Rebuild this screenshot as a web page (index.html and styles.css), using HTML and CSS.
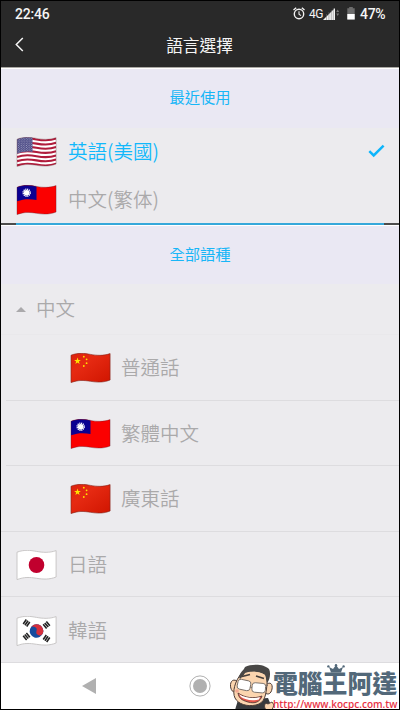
FILE: index.html
```html
<!DOCTYPE html>
<html lang="zh-Hant">
<head>
<meta charset="utf-8">
<title>語言選擇</title>
<link rel="stylesheet" href="styles.css">
</head>
<body>
<svg class="defs" width="0" height="0">
  <defs>
    <clipPath id="wave"><path d="M.5 2.2C8-.6 14 .3 20 1.4S33 3 39.6.6V27C33 29.6 27 29.4 20 28.3S8 26.8.5 29.6Z"/></clipPath>
    <path id="edge" d="M.5 2.2C8-.6 14 .3 20 1.4S33 3 39.6.6V27C33 29.6 27 29.4 20 28.3S8 26.8.5 29.6Z"/>
    <path id="stripe" d="M.5 2.2C8-.6 14 .3 20 1.4S33 3 39.6.6" fill="none" stroke="#b01c3c" stroke-width="2.1"/>
    <path id="star" d="M0-3.6 .85-1.1 3.4-1.1 1.35.45 2.1 3 0 1.5-2.1 3-1.35.45-3.4-1.1-.85-1.1Z"/>
    <linearGradient id="red" x1="0" y1="0" x2="1" y2="1"><stop offset="0" stop-color="#dc220c"/><stop offset=".35" stop-color="#e62a12"/><stop offset="1" stop-color="#d01500"/></linearGradient>
    <pattern id="dots" width="2.6" height="2.2" patternUnits="userSpaceOnUse"><circle cx=".7" cy=".6" r=".5" fill="#c9c8df"/><circle cx="2" cy="1.7" r=".5" fill="#c9c8df"/></pattern>
    <symbol id="us" viewBox="0 0 40 30">
      <g clip-path="url(#wave)"><rect width="40" height="30" fill="#fff"/>
        <use href="#stripe" y="1"/><use href="#stripe" y="5.2"/><use href="#stripe" y="9.4"/><use href="#stripe" y="13.6"/><use href="#stripe" y="17.8"/><use href="#stripe" y="22"/><use href="#stripe" y="26.2"/>
        <path d="M0 0H16V15C10 14 6 15 0 17Z" fill="#484783"/><path d="M0 0H16V15C10 14 6 15 0 17Z" fill="url(#dots)"/></g>
      <use href="#edge" fill="none" stroke="#70464c" stroke-opacity=".6" stroke-width=".6"/>
    </symbol>
    <symbol id="tw" viewBox="0 0 40 30">
      <g clip-path="url(#wave)"><rect width="40" height="30" fill="#fb0000"/><path d="M0 0H20V15C13 13.7 7 13.8 0 16.5Z" fill="#0a0091"/>
        <circle cx="10.2" cy="7.7" r="3.5" fill="none" stroke="#fff" stroke-width="1.5" stroke-dasharray="1.1 .73"/><circle cx="10.2" cy="7.7" r="2.8" fill="#fff"/></g>
      <use href="#edge" fill="none" stroke="#60202c" stroke-opacity=".6" stroke-width=".6"/>
    </symbol>
    <symbol id="cn" viewBox="0 0 40 30">
      <use href="#edge" fill="url(#red)" stroke="#82251c" stroke-width=".6"/>
      <g fill="#ffe100"><use href="#star" x="7" y="8"/><circle cx="13.3" cy="3.7" r=".9"/><circle cx="16.1" cy="6.3" r=".9"/><circle cx="16.1" cy="10.2" r=".9"/><circle cx="13.3" cy="13" r=".9"/></g>
    </symbol>
    <symbol id="jp" viewBox="0 0 40 30">
      <use href="#edge" fill="#fff" stroke="#c4c2c2" stroke-width=".9"/><ellipse cx="20" cy="15" rx="7.8" ry="8.1" fill="#c1002e"/>
    </symbol>
    <g id="bars" stroke="#222" stroke-width="1.6"><path d="M-2.7-2.1H2.7M-2.7 0H2.7M-2.7 2.1H2.7"/></g>
    <symbol id="kr" viewBox="0 0 40 30">
      <use href="#edge" fill="#fff" stroke="#c4c2c2" stroke-width=".9"/>
      <g transform="rotate(18 20 15)"><circle cx="20" cy="15" r="6.8" fill="#174b9e"/><path d="M13.2 15A6.8 6.8 0 0 1 26.8 15A3.4 3.4 0 0 1 20 15A3.4 3.4 0 0 0 13.2 15Z" fill="#d62f3c"/></g>
      <use href="#bars" transform="translate(10 7) rotate(-55)"/><use href="#bars" transform="translate(30 9) rotate(50)"/><use href="#bars" transform="translate(10 20.5) rotate(50)"/><use href="#bars" transform="translate(30 22.5) rotate(-55)"/>
    </symbol>
  </defs>
</svg>
<div class="phone">
  <header class="top">
    <div class="status">
      <span class="time">22:46</span>
      <svg class="alarm" viewBox="0 0 12 13" fill="none" stroke="#f2f2f2"><circle cx="6" cy="7" r="4.7" stroke-width="1.4"/><path d="M.5 3 3.2.8M11.5 3 8.8.8" stroke-width="1.4"/><path d="M6 4.2V7.2L8 8.6" stroke-width="1.1"/></svg>
      <span class="net">4G</span>
      <svg class="signal" viewBox="0 0 17 12"><path d="M0 12 12 0V12Z" fill="#f2f2f2"/><path d="M3.5 6V12M5.9 4V12M8.3 2V12M10.3 0V12" stroke="#777" stroke-width=".5"/><path d="M13.3 4 14.7 1.5 16.1 4ZM13.3 5.6H16.1L14.7 8.1Z" fill="#777"/></svg>
      <svg class="battery" viewBox="0 0 8 13"><path d="M2.2 0H5.8V1.3H7.7V12.5H.3V1.3H2.2Z" fill="#6c6c6c"/><path d="M.3 7H7.7V12.5H.3Z" fill="#fff"/></svg>
      <span class="percent">47%</span>
    </div>
    <div class="titlebar">
      <svg class="back" viewBox="0 0 9 15"><path d="M7.8 1 1.3 7.5 7.8 14" fill="none" stroke="#f5f5f5" stroke-width="1.5"/></svg>
      <h1>語言選擇</h1>
    </div>
  </header>
  <h2 class="section recent-head">最近使用</h2>
  <ul class="recent">
    <li class="selected"><svg class="flag"><use href="#us"/></svg><span>英語(美國)</span><svg class="check" viewBox="0 0 17 14"><path d="M1.3 7.2 5.7 11.4 15.6 1.7" fill="none" stroke="#0db5fb" stroke-width="2.5"/></svg></li>
    <li><svg class="flag"><use href="#tw"/></svg><span>中文(繁体)</span></li>
  </ul>
  <div class="divider"><i></i></div>
  <h2 class="section all-head">全部語種</h2>
  <ul class="languages">
    <li class="group"><svg class="caret" viewBox="0 0 10 5"><path d="M0 5 5 0 10 5Z" fill="#aaa9ab"/></svg><span>中文</span></li>
    <li class="child"><svg class="flag"><use href="#cn"/></svg><span>普通話</span></li>
    <li class="child"><svg class="flag"><use href="#tw"/></svg><span>繁體中文</span></li>
    <li class="child last"><svg class="flag"><use href="#cn"/></svg><span>廣東話</span></li>
    <li><svg class="flag"><use href="#jp"/></svg><span>日語</span></li>
    <li><svg class="flag"><use href="#kr"/></svg><span>韓語</span></li>
  </ul>
  <nav class="nav">
    <svg class="nav-back" viewBox="0 0 14 16"><path d="M0 8 14 0V16Z" fill="#b0b0b0"/></svg>
    <svg class="nav-home" viewBox="0 0 22 22"><circle cx="11" cy="11" r="10.1" fill="none" stroke="#b0b0b0" stroke-width="1"/><circle cx="11" cy="11" r="7" fill="#b0b0b0"/></svg>
  </nav>
  <div class="watermark">
    <svg class="face" viewBox="0 0 45 46">
      <path d="M5 46 8 36 38 34 43 46Z" fill="#383a3d"/>
      <g stroke="#4b3b36" stroke-width="1" fill="#fbd5af"><path d="M7 17C2 14-.5 19 .8 24S6 29 9 27"/><path d="M36 21C40 17 43 20 42 25S38 31 35 29"/>
      <path d="M11 10C5 17 2 28 5 34S17 43 26 41 36 31 37 20C38 11 34 6 27 5S14 6 11 10Z"/></g>
      <path d="M9 13C10 8 14 6 15 3 21-.3 34-.5 39 5 41 9 40 16 37 19L35 11C29 7 20 7 15 10L10 15Z" fill="#484746"/>
      <path d="M15 9C20 7 29 7 35 11L36 15H12Z" fill="#fbd5af"/>
      <path d="M12 12.5 20 10.5M26 12 34 14.5" stroke="#443e3b" stroke-width="1.8"/>
      <g fill="#fff" stroke="#756d68" stroke-width=".9"><rect x="7.5" y="16" width="13" height="10" rx="2.8" transform="rotate(12 14 21)"/><rect x="22" y="19" width="13.5" height="9.5" rx="2.8" transform="rotate(5 28 24)"/><path d="M20 23 22 23.5M35 24 38 21"/></g>
      <path d="M8 29C15 34 24 35 32 32 30 38 25 40 18 38S9 34 8 29Z" fill="#e6564a" stroke="#583b35" stroke-width=".9"/><path d="M9 30.3C16 34.3 23 35 30 33L29 35.5C22 37 15 36 11 33Z" fill="#fff"/>
      <circle cx="7" cy="27" r="1.8" fill="#f4a792"/><path d="M36 46C33 42 35 38 38 40L42 38 44 41 42 46Z" fill="#fbd5af" stroke="#4b3b36" stroke-width=".9"/>
    </svg>
    <div class="brand">
      <svg class="crown" viewBox="0 0 18 9"><path d="M2 3 6 5 9 1 12 5 16 3 14 8.5H4Z" fill="#526879"/><g fill="#526879"><circle cx="1.4" cy="2.4" r="1.2"/><circle cx="9" cy="1.3" r="1.2"/><circle cx="16.6" cy="2.4" r="1.2"/></g></svg>
      <b>電腦王阿達</b>
      <span>http://www.kocpc.com.tw</span>
    </div>
  </div>
</div>
</body>
</html>
```

FILE: styles.css
```css
* { box-sizing: border-box; }
body { margin: 0; font-family: Roboto, "Noto Sans CJK TC", sans-serif; }
h1, h2, ul { margin: 0; padding: 0; font-weight: 400; }
ul { list-style: none; }
svg { display: block; flex: none; }
.defs { position: absolute; }
.phone { position: relative; width: 400px; height: 710px; border: 1px solid #000; background: #ecebee; overflow: hidden; display: flex; flex-direction: column; }
.top { height: 67px; flex: none; background: #292929; color: #f5f5f5; border-bottom: 1px solid #aaa8a4; }
.status { height: 25px; padding: 0 13px 0 14px; display: flex; align-items: center; font-size: 14px; font-weight: 500; }
.time { margin-right: auto; letter-spacing: -.2px; }
.alarm { width: 12px; height: 13px; }
.net { font-size: 12px; font-weight: 400; margin-left: 4px; width: 13px; letter-spacing: -.6px; }
.signal { width: 17px; height: 12px; margin-left: 1px; }
.battery { width: 8px; height: 13px; margin-left: 7px; }
.percent { margin-left: 5px; width: 26px; letter-spacing: -.3px; white-space: nowrap; }
.titlebar { height: 40px; display: flex; padding: 9px 14px 0; }
.back { width: 9px; height: 15px; margin-top: 2px; }
h1 { flex: 1; margin-right: 10px; text-align: center; font: 400 16.7px/20px "Noto Sans CJK TC", sans-serif; }
.section { flex: none; background: #eae8f3; color: #18b6f7; text-align: center; font: 400 15.3px/20px "Noto Sans CJK TC", sans-serif; }
.recent-head { height: 60px; padding-top: 17px; border-top: 1px solid #fff; }
.all-head { height: 58px; padding-top: 17px; }
li { display: flex; align-items: center; padding-left: 15px; color: #aaa9aa; font: 350 19.5px/28px "Noto Sans CJK TC", sans-serif; }
li span { margin-top: -2px; }
.flag { width: 41px; height: 30px; margin-right: 11px; }
.recent { height: 95px; flex: none; }
.recent li { height: 48px; }
.recent .selected { color: #12b8fb; }
.check { width: 17px; height: 14px; margin: -2px 14px 0 auto; }
.divider { flex: none; height: 3px; padding: 0 15px; border-top: 2px solid #4c4c4c; border-bottom: 1px solid #fff; }
.divider i { display: block; height: 2px; margin-top: -2px; background: #36a8da; }
.languages { flex: none; height: 379px; }
.languages li { height: 65.6px; border-bottom: 1px solid #dddcdf; }
.languages li span { margin-top: 0; }
.languages .flag { margin-top: 2px; }
.languages .group { height: 51px; border-color: #e9e8eb; }
.languages .group span { margin-top: -2px; }
.caret { width: 10px; height: 5px; margin-right: 10px; }
.languages .child { margin-left: 5px; padding-left: 64px; }
.languages .child .flag { margin-right: 10px; }
.languages .last { margin-left: 0; padding-left: 69px; }
.nav { flex: none; height: 48px; background: #fff; display: flex; align-items: center; padding-left: 81px; }
.nav-back { width: 14px; height: 16px; margin-top: -3px; }
.nav-home { width: 22px; height: 22px; margin-left: 93px; margin-top: -3px; }
.watermark { position: absolute; left: 229px; top: 663px; width: 169px; height: 46px; display: flex; }
.face { width: 45px; height: 46px; margin-right: -2px; }
.brand { position: relative; height: 46px; white-space: nowrap; }
.brand b { display: block; margin-top: 6px; font: 900 24.8px/25px "Noto Sans CJK TC", sans-serif; height: 28px; color: #526879; }
.brand span { display: block; font: 600 10px/12px "Open Sans", sans-serif; color: #e83345; }
.crown { position: absolute; left: 54px; top: 0; width: 18px; height: 9px; }
```
